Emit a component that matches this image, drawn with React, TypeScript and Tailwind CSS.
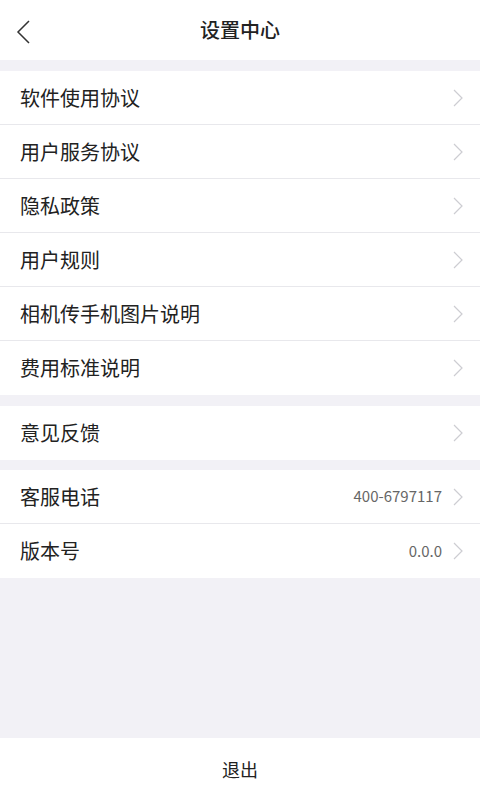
import React from "react";

const Chevron = () => (
  <svg width="12" height="20" viewBox="0 0 12 20" className="shrink-0">
    <path d="M2 2 L10 10 L2 18" fill="none" stroke="#cdcdd2" strokeWidth="1.2" />
  </svg>
);

const Row = ({ label, value, last }: { label: string; value?: string; last?: boolean }) => (
  <div className={`flex h-[54px] items-center justify-between bg-white pl-5 pr-4 ${last ? "" : "border-b border-[#e8e8ec]"}`}>
    <span className="text-[20px] text-[#222]">{label}</span>
    <div className="flex items-center gap-[10px]">
      {value && <span className="text-[15px] text-[#666]">{value}</span>}
      <Chevron />
    </div>
  </div>
);

export default function App() {
  return (
    <div
      className="flex h-[800px] w-[480px] flex-col bg-[#f2f1f6]"
      style={{ fontFamily: '"Noto Sans CJK SC", "Noto Sans", sans-serif' }}
    >
      <div className="relative flex h-[60px] items-center justify-center bg-white">
        <svg width="16" height="26" viewBox="0 0 16 26" className="absolute left-[16px] top-[19px]">
          <path d="M13 2 L2 13 L13 24" fill="none" stroke="#333" strokeWidth="1.5" />
        </svg>
        <span className="text-[20px] font-medium text-[#222]">设置中心</span>
      </div>
      <div className="mt-[11px] flex flex-col">
        <Row label="软件使用协议" />
        <Row label="用户服务协议" />
        <Row label="隐私政策" />
        <Row label="用户规则" />
        <Row label="相机传手机图片说明" />
        <Row label="费用标准说明" last />
      </div>
      <div className="mt-[11px] flex flex-col">
        <Row label="意见反馈" last />
      </div>
      <div className="mt-[10px] flex flex-col">
        <Row label="客服电话" value="400-6797117" />
        <Row label="版本号" value="0.0.0" last />
      </div>
      <div className="flex-1" />
      <div className="flex h-[62px] items-center justify-center bg-white">
        <span className="text-[18px] text-[#222]">退出</span>
      </div>
    </div>
  );
}
